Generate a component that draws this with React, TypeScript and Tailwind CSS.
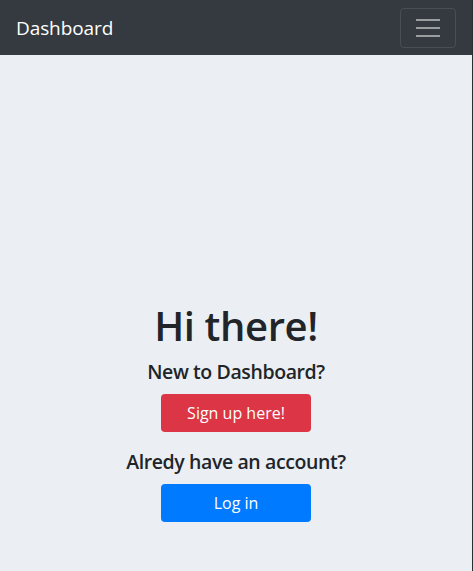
export default function App() {
  return (
    <div className="h-[571px] w-full flex bg-[#2b3035]">
      <div
        className="h-full w-[472px] flex flex-col bg-[#ebeff3] text-[#212529]"
        style={{ fontFamily: '"Open Sans", "Noto Sans", sans-serif' }}
      >
        <nav className="h-[55px] bg-[#343a40] flex items-center justify-between px-4">
          <span className="text-white text-[19px] leading-[30px] tracking-[-0.1px]">Dashboard</span>
          <button className="w-[56px] h-[40px] border border-white/10 rounded-[4px] flex flex-col items-center justify-center gap-[6px]">
            <span className="block w-[24px] h-[2px] bg-white/50" />
            <span className="block w-[24px] h-[2px] bg-white/50" />
            <span className="block w-[24px] h-[2px] bg-white/50" />
          </button>
        </nav>
        <main className="flex-1 flex flex-col items-center justify-end pb-[49px]">
          <h1 className="text-[40px] leading-[48px] font-semibold mb-[10px] tracking-[-0.4px]">Hi there!</h1>
          <h5 className="text-[19.5px] leading-[24px] font-semibold mb-[10px] tracking-[-0.4px]">New to Dashboard?</h5>
          <button className="w-[150px] h-[38px] rounded-[4px] bg-[#dc3545] text-white text-[16px]">
            Sign up here!
          </button>
          <h5 className="text-[19.5px] leading-[24px] font-semibold mt-[18px] mb-[10px] tracking-[-0.4px]">Alredy have an account?</h5>
          <button className="w-[150px] h-[38px] rounded-[4px] bg-[#007bff] text-white text-[16px]">
            Log in
          </button>
        </main>
      </div>
    </div>
  );
}
